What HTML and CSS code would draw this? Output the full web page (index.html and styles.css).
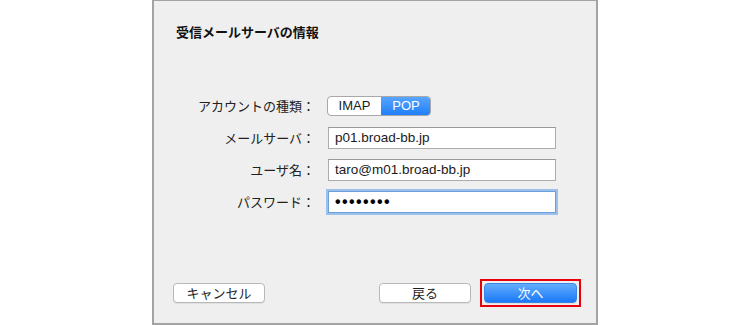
FILE: index.html
```html
<!DOCTYPE html>
<html lang="ja">
<head>
<meta charset="utf-8">
<link rel="stylesheet" href="styles.css">
</head>
<body>
<div class="panel">
  <h1 class="title">受信メールサーバの情報</h1>
  <div class="form">
    <div class="label">アカウントの種類：</div>
    <div class="seg">
      <span class="seg-item">IMAP</span>
      <span class="seg-item seg-on">POP</span>
    </div>
    <div class="label">メールサーバ：</div>
    <div class="field">p01.broad-bb.jp</div>
    <div class="label">ユーザ名：</div>
    <div class="field">taro@m01.broad-bb.jp</div>
    <div class="label">パスワード：</div>
    <div class="field field-focus"><span class="dots">••••••••</span></div>
  </div>
  <div class="buttons">
    <button class="btn">キャンセル</button>
    <div class="spacer"></div>
    <button class="btn">戻る</button>
    <div class="highlight"><button class="btn btn-primary">次へ</button></div>
  </div>
</div>
</body>
</html>
```
FILE: styles.css
```css
html, body {
  margin: 0;
  padding: 0;
  background: #ffffff;
}
body {
  font-family: "Liberation Sans", "Noto Sans CJK JP", sans-serif;
  color: #1e1e1e;
}
.panel {
  box-sizing: border-box;
  margin-left: 152px;
  width: 446px;
  height: 325px;
  background: #efefef;
  border: 2px solid #a3a3a3;
  border-top-width: 1px;
  display: flex;
  flex-direction: column;
}
.title {
  margin: 23px 0 0 22px;
  font-size: 13px;
  line-height: 16px;
  font-weight: bold;
  font-family: "Noto Sans CJK JP", sans-serif;
  color: #111;
}
.form {
  margin-top: 55px;
  display: grid;
  grid-template-columns: 161px 229px;
  grid-auto-rows: 22px;
  column-gap: 12px;
  row-gap: 10px;
  align-items: center;
}
.label {
  text-align: right;
  font-family: "Noto Sans CJK JP", sans-serif;
  font-size: 13px;
  line-height: 22px;
  color: #222;
}
.seg {
  display: flex;
  width: 104px;
  height: 20px;
  box-sizing: border-box;
  border: 1px solid #a8a8a8;
  border-radius: 4px;
  overflow: hidden;
  background: #fff;
}
.seg-item {
  flex: 0 0 53px;
  text-align: center;
  font-size: 13px;
  line-height: 18px;
  color: #1a1a1a;
}
.seg-on {
  flex: 1;
  background: linear-gradient(#5aa8ff, #1d7cf9);
  color: #fff;
  margin: -1px -1px -1px 0;
  line-height: 20px;
}
.field {
  box-sizing: border-box;
  margin-left: 1px;
  width: 228px;
  height: 22px;
  background: #fff;
  border: 1px solid #acacac;
  border-top-color: #999;
  padding-left: 6px;
  font-size: 13.5px;
  line-height: 20px;
  color: #1a1a1a;
}
.field-focus {
  border-color: #6c9fd9;
  box-shadow: 0 0 0 2px #9cc0ea;
}
.dots {
  font-size: 16px;
  font-weight: bold;
  letter-spacing: 1.4px;
  color: #000;
}
.buttons {
  margin-top: auto;
  margin-bottom: 20px;
  padding: 0 19px;
  display: flex;
  align-items: center;
  gap: 13px;
}
.spacer {
  flex: 1;
}
.btn {
  box-sizing: border-box;
  width: 92px;
  height: 20px;
  padding: 0;
  background: #fff;
  border: 1px solid #b8b8b8;
  border-radius: 4px;
  box-shadow: 0 1px 0 rgba(0,0,0,0.06);
  font-family: "Noto Sans CJK JP", sans-serif;
  font-size: 13px;
  line-height: 18px;
  color: #1e1e1e;
}
.highlight {
  display: flex;
  margin: -4px;
  padding: 2px;
  border: 2px solid #e8000b;
}
.btn-primary {
  width: 93px;
  background: linear-gradient(#63adff, #1a78f7);
  border-color: #3a85e6;
  color: #fff;
}
```
